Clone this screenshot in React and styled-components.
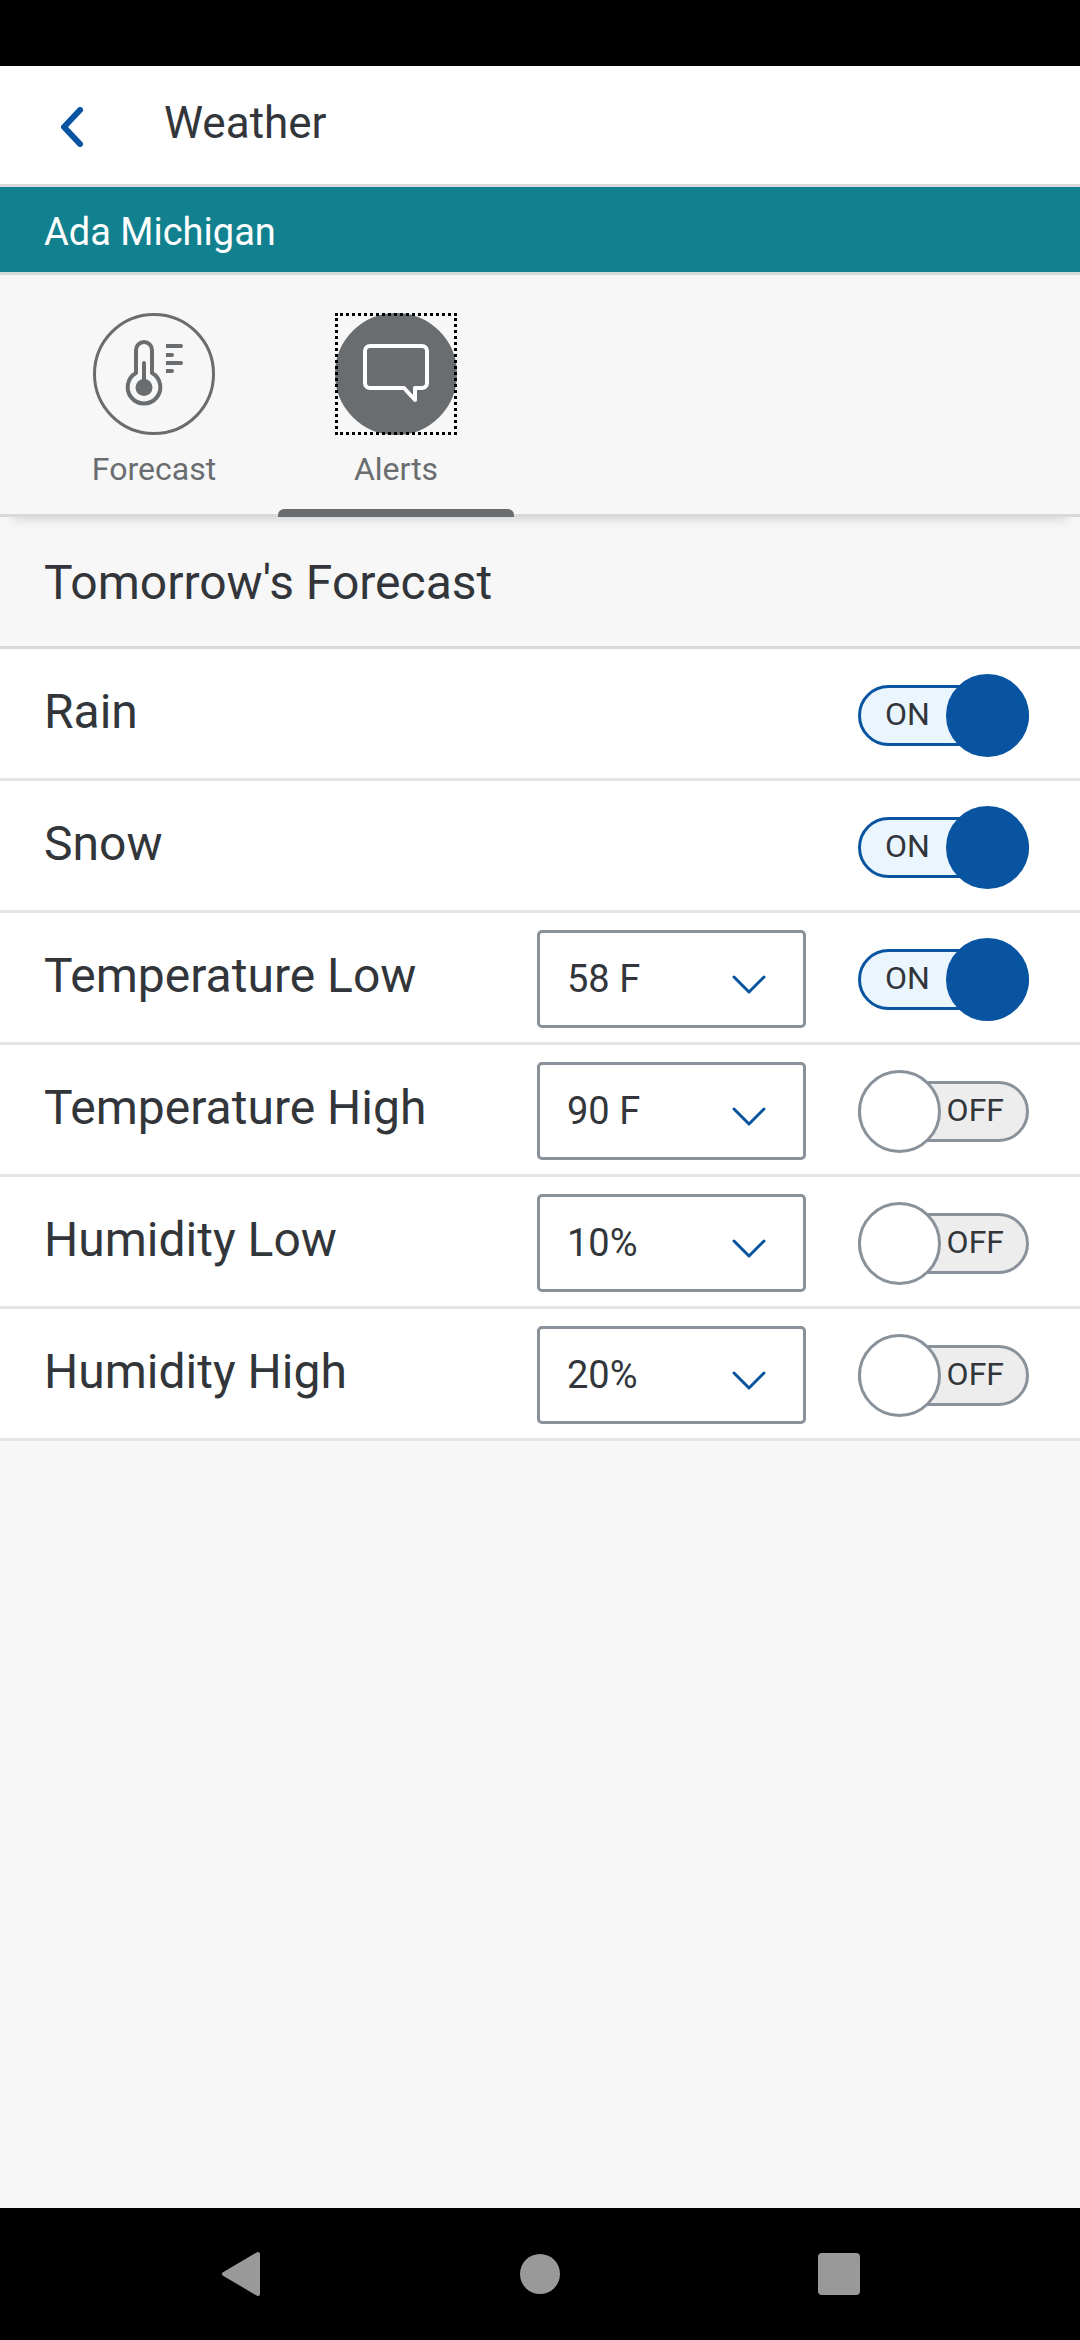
import React, { useState } from 'react';
import styled, { createGlobalStyle } from 'styled-components';

const GlobalStyle = createGlobalStyle`
    * {
        box-sizing: border-box;
    }

    body {
        margin: 0;
        background-color: #f7f7f7;
        color: #32363a;
        font-family: Roboto, "Noto Sans", sans-serif;
    }

    h1, h2 {
        margin: 0;
        font-weight: 400;
    }

    button {
        padding: 0;
        border: 0;
        background: none;
        font-family: inherit;
        cursor: pointer;
    }
`;

const Screen = styled.div`
    display: flex;
    flex-direction: column;
    min-height: 100vh;
`;

const StatusBar = styled.div`
    height: 66px;
    background-color: #000;
`;

const Header = styled.header`
    display: flex;
    align-items: center;
    height: 121px;
    padding: 3px 36px 0;
    background-color: #fff;
    border-bottom: 3px solid #d9d9d9;
`;

const BackButton = styled.button`
    display: flex;
    align-items: center;
    justify-content: center;
    width: 72px;
    height: 72px;
    margin-right: 56px;
`;

const Title = styled.h1`
    font-size: 44px;
    line-height: 50px;
    padding-bottom: 8px;
`;

const Location = styled.div`
    height: 88px;
    padding: 0 44px;
    background-color: #11818f;
    border-bottom: 3px solid #d0dcdc;
    color: #fff;
    font-size: 38px;
    line-height: 90px;
`;

const Tabs = styled.nav`
    display: flex;
    gap: 6px;
    height: 242px;
    padding: 0 36px;
    border-bottom: 3px solid #d9d9d9;
    box-shadow: 0 12px 12px -12px rgba(0, 0, 0, .2);
`;

const Tab = styled.button`
    display: flex;
    flex-direction: column;
    align-items: center;
    width: 236px;
    height: 242px;
    padding-top: 38px;
    color: #6a6d70;
    font-size: 32px;
    line-height: 38px;
`;

const TabIcon = styled.span`
    display: flex;
    align-items: center;
    justify-content: center;
    width: 122px;
    height: 122px;
    border: 3px solid #6a6d70;
    border-radius: 50%;
    background-color: ${({ $active }) => ($active ? '#6a6d70' : 'transparent')};
`;

const FocusRing = styled.span`
    outline: ${({ $active }) => ($active ? '3px dotted #000' : 'none')};
    outline-offset: -3px;
    margin-bottom: 15px;
`;

const Indicator = styled.span`
    width: 100%;
    height: 8px;
    margin-top: auto;
    border-radius: 6px 6px 0 0;
    background-color: ${({ $active }) => ($active ? '#6a6d70' : 'transparent')};
`;

const SectionTitle = styled.h2`
    height: 132px;
    padding: 0 44px;
    border-bottom: 3px solid #d9d9d9;
    font-size: 48px;
    line-height: 132px;
`;

const List = styled.ul`
    margin: 0;
    padding: 0;
    list-style: none;
`;

const Row = styled.li`
    display: flex;
    align-items: center;
    height: 132px;
    padding: 3px 51px 0 44px;
    background-color: #fff;
    border-bottom: 3px solid #e5e5e5;
`;

const RowLabel = styled.span`
    flex: 1;
    padding-bottom: 6px;
    font-size: 48px;
    line-height: 56px;
`;

const SelectBox = styled.div`
    position: relative;
    width: 269px;
    margin-right: 52px;

    svg {
        position: absolute;
        top: 45px;
        right: 40px;
        pointer-events: none;
    }
`;

const Select = styled.select`
    display: block;
    appearance: none;
    width: 100%;
    height: 98px;
    padding: 0 27px;
    border: 3px solid #89919a;
    border-radius: 5px;
    background-color: #fff;
    color: #32363a;
    font-family: inherit;
    font-size: 38px;
`;

const Switch = styled.label`
    position: relative;
    display: flex;
    align-items: center;
    width: 171px;
    height: 83px;
    font-size: 32px;
    cursor: pointer;

    input {
        position: absolute;
        inset: 0;
        margin: 0;
        opacity: 0;
    }
`;

const Track = styled.span`
    flex: 1;
    height: 61px;
    padding: 0 22px 0 24px;
    border: 3px solid ${({ $on }) => ($on ? '#0854a0' : '#89919a')};
    border-radius: 31px;
    background-color: ${({ $on }) => ($on ? '#ebf5fe' : '#ededed')};
    line-height: 52px;
    text-align: ${({ $on }) => ($on ? 'left' : 'right')};
`;

const Knob = styled.span`
    position: absolute;
    top: 0;
    ${({ $on }) => ($on ? 'right: 0' : 'left: 0')};
    width: 83px;
    height: 83px;
    border: 3px solid ${({ $on }) => ($on ? '#0854a0' : '#89919a')};
    border-radius: 50%;
    background-color: ${({ $on }) => ($on ? '#0854a0' : '#fff')};
`;

const NavBar = styled.nav`
    display: grid;
    grid-template-columns: repeat(3, 1fr);
    height: 132px;
    margin-top: auto;
    padding: 0 92px;
    background-color: #000;
`;

const NavButton = styled.button`
    display: flex;
    align-items: center;
    justify-content: center;
`;

const BackIcon = () => (
    <svg width="24" height="40" viewBox="0 0 24 40" fill="none" stroke="#0854a0" strokeWidth="6" strokeLinecap="round" strokeLinejoin="round">
        <path d="M20 3L4 20l16 17" />
    </svg>
);

const ThermometerIcon = () => (
    <svg width="72" height="72" viewBox="0 0 72 72" fill="none" stroke="#6a6d70" strokeWidth="4">
        <path d="M18 35V12a8 8 0 0 1 16 0v23a16.300 16.300 0 1 1-16 0z" strokeLinejoin="round" />
        <path d="M26 25v24" strokeLinecap="round" />
        <circle cx="26" cy="49.500" r="8.500" fill="#6a6d70" stroke="none" />
        <g fill="#6a6d70" stroke="none">
            <path d="M48 6h15a2 2 0 0 1 0 4H48z" />
            <path d="M48 15h6a2 2 0 0 1 0 4H48z" />
            <path d="M48 23h15a2 2 0 0 1 0 4H48z" />
            <path d="M48 31h6a2 2 0 0 1 0 4H48z" />
        </g>
    </svg>
);

const CommentIcon = () => (
    <svg width="72" height="72" viewBox="0 0 72 72" fill="none" stroke="#fff" strokeWidth="4" strokeLinejoin="round">
        <path d="M10 8h52a5 5 0 0 1 5 5v32a5 5 0 0 1-5 5h-7v12L44 50H10a5 5 0 0 1-5-5V13a5 5 0 0 1 5-5z" />
    </svg>
);

const ArrowIcon = () => (
    <svg width="34" height="20" viewBox="0 0 34 20" fill="none" stroke="#0854a0" strokeWidth="3" strokeLinecap="round" strokeLinejoin="round">
        <path d="M2 2l15 15L32 2" />
    </svg>
);

const alerts = [
    { id: 'rain', label: 'Rain', on: true },
    { id: 'snow', label: 'Snow', on: true },
    { id: 'temp-low', label: 'Temperature Low', options: ['58 F', '60 F', '62 F'], on: true },
    { id: 'temp-high', label: 'Temperature High', options: ['90 F', '92 F', '94 F'], on: false },
    { id: 'humidity-low', label: 'Humidity Low', options: ['10%', '15%', '20%'], on: false },
    { id: 'humidity-high', label: 'Humidity High', options: ['20%', '25%', '30%'], on: false },
];

const AlertRow = ({ item }) => {

    const [ on , setOn ] = useState(item.on);

    return (
        <Row>
            <RowLabel id={item.id}>{item.label}</RowLabel>
            {item.options && (
                <SelectBox>
                    <Select aria-labelledby={item.id}>
                        {item.options.map((option) => <option key={option}>{option}</option>)}
                    </Select>
                    <ArrowIcon />
                </SelectBox>
            )}
            <Switch>
                <input type="checkbox" role="switch" aria-labelledby={item.id} checked={on} onChange={() => setOn(!on)} />
                <Track $on={on}>{on ? 'ON' : 'OFF'}</Track>
                <Knob $on={on} />
            </Switch>
        </Row>
    )
}

const tabs = [
    { name: 'Forecast', icon: <ThermometerIcon /> },
    { name: 'Alerts', icon: <CommentIcon /> },
];

const App = () => {

    const [ active , setActive ] = useState('Alerts');

    return (
        <Screen>
            <GlobalStyle />
            <StatusBar />
            <Header>
                <BackButton aria-label="Back"><BackIcon /></BackButton>
                <Title>Weather</Title>
            </Header>
            <Location>Ada Michigan</Location>
            <Tabs>
                {tabs.map((tab) => (
                    <Tab key={tab.name} onClick={() => setActive(tab.name)}>
                        <FocusRing $active={tab.name === active}>
                            <TabIcon $active={tab.name === active}>{tab.icon}</TabIcon>
                        </FocusRing>
                        {tab.name}
                        <Indicator $active={tab.name === active} />
                    </Tab>
                ))}
            </Tabs>
            <SectionTitle>Tomorrow's Forecast</SectionTitle>
            <List>
                {alerts.map((item) => <AlertRow item={item} key={item.id} />)}
            </List>
            <NavBar>
                <NavButton aria-label="Go back">
                    <svg width="40" height="46" viewBox="0 0 40 46" fill="#999" stroke="#999" strokeWidth="4" strokeLinejoin="round">
                        <path d="M37 3v40L3 23z" />
                    </svg>
                </NavButton>
                <NavButton aria-label="Home">
                    <svg width="40" height="40" viewBox="0 0 40 40" fill="#999">
                        <circle cx="20" cy="20" r="20" />
                    </svg>
                </NavButton>
                <NavButton aria-label="Recent apps">
                    <svg width="42" height="42" viewBox="0 0 42 42" fill="#999">
                        <rect width="42" height="42" rx="4" />
                    </svg>
                </NavButton>
            </NavBar>
        </Screen>
    )
}

export default App;
